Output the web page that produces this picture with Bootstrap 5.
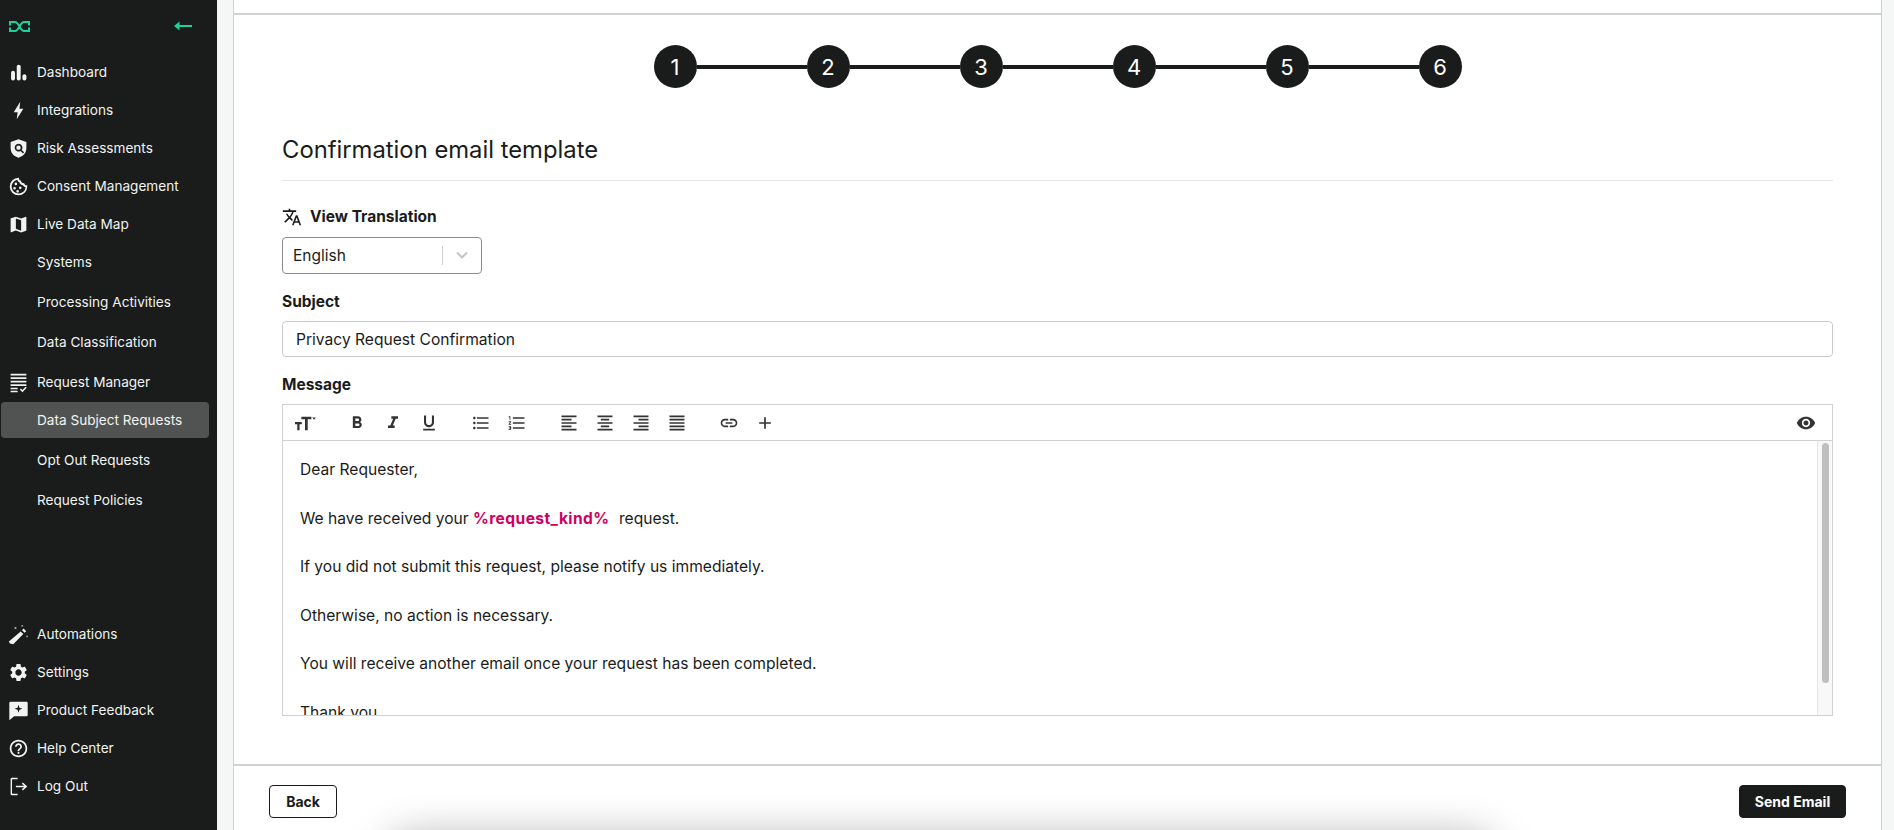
<!DOCTYPE html>
<html lang="en">
<head>
  <meta charset="UTF-8" />
  <meta name="viewport" content="width=device-width, initial-scale=1.0" />
  <title>Confirmation email template</title>
  <link href="https://cdn.jsdelivr.net/npm/bootstrap@5.3.0/dist/css/bootstrap.min.css" rel="stylesheet" />
  <style>
    html, body { height: 830px; overflow: hidden; }
    body { font-family: "Inter", "Liberation Sans", sans-serif; font-size: 14px; color: #1a1c1b; background: #f5f7f6; }

    /* sidebar */
    .side-bar { width: 217px; height: 830px; flex: none; background: #1a1c1b; color: #f1f3f2; }
    .side-head { height: 52px; padding: 0 25px 0 9px; }
    .side-main { padding-top: 1px; }
    .side-link { height: 38px; padding-left: 8px; gap: 8px; color: #f1f3f2; text-decoration: none; font-size: 13.6px; }
    .side-link svg { width: 21px; height: 21px; fill: #f1f3f2; flex: none; }
    .side-sub { height: 36px; margin: 0 8px 4px 1px; padding-left: 36px; border-radius: 4px; color: #f1f3f2; text-decoration: none; font-size: 13.6px; }
    .side-sub.sub-first { margin-top: 1px; }
    .side-sub.sub-last { margin-bottom: 3px; }
    .side-sub.is-on { background: #515352; }
    .side-bottom { padding-bottom: 25px; }

    /* main */
    .main-wrap { padding: 0 12px 0 16px; position: relative; overflow: hidden; }
    .wizard { background: #fff; border-left: 1px solid #d0d2d1; border-right: 1px solid #d0d2d1; height: 830px; }
    .wizard-top { height: 15px; border-bottom: 2px solid #d0d2d1; }
    .wizard-body { height: 749px; padding: 30px 48px 0; }
    .wizard-foot { height: 66px; padding: 19px 35px 0 35px; border-top: 2px solid #d0d2d1; }

    .step-dot { width: 43px; height: 43px; border-radius: 50%; background: #1a1c1b; color: #fff; font-size: 22px; line-height: 1; }
    .step-bar { width: 110px; height: 4px; background: #1a1c1b; }

    .wizard-title { font-size: 23.800px; font-weight: 400; line-height: 32px; margin: 46px 0 0; padding-bottom: 14px; border-bottom: 1px solid #e6e8e7; }
    .field-label { font-size: 15.500px; font-weight: 700; line-height: 20px; margin: 18px 0 0; }
    .field-trans { margin-top: 26px; }
    .field-trans svg { width: 20px; height: 20px; margin-right: 8px; fill: #1a1c1b; }
    .lang-select { width: 200px; height: 37px; border: 1px solid #8c8e8d; border-radius: 4px; font-size: 15.500px; padding-left: 10px; margin-top: 10px; }
    .lang-sep { width: 1px; height: 19px; background: #cfcfcf; }
    .lang-arrow { width: 38px; }
    .subject-input.form-control { height: 36px; border: 1px solid #c9cbca; border-radius: 4px; font-size: 15.600px; padding: 0 13px; color: #1a1c1b; margin-top: 9px; }

    .editor-box { height: 312px; border: 1px solid #d0d2d1; margin-top: 9px; }
    .editor-tools { height: 36px; border-bottom: 1px solid #d0d2d1; padding: 0 8px 0 4px; gap: 16px; }
    .tool-btn { width: 36px; height: 35px; }
    .tool-btn svg { width: 20px; height: 20px; fill: #333; }
    .tool-size svg { width: 22px; height: 20px; }
    .editor-main { height: 274px; }
    .editor-text { overflow: hidden; padding: 17px 16px 0 17px; font-size: 15.600px; line-height: 24.250px; color: #1a1c1b; }
    .editor-text p { margin: 0 0 24.250px; }
    .editor-track { width: 15px; flex: none; background: #f8f8f8; border-left: 1px solid #e6e6e6; padding: 2px 3px 0 4px; }
    .editor-thumb { height: 240px; background: #bfbfbf; border-radius: 4px; }
    .kind-tag { color: #cf0060; font-weight: 700; letter-spacing: .4px; margin-right: 5px; }

    .foot-btn { height: 33px; padding: 0; font-size: 14px; font-weight: 700; border-radius: 4px; display: flex; align-items: center; justify-content: center; }
    .back-btn { width: 68px; border: 1px solid #1a1c1b; color: #1a1c1b; background: #fff; }
    .send-btn { width: 107px; border: 1px solid #1a1c1b; color: #fff; background: #1a1c1b; }
    .foot-shade { position: absolute; left: 172px; width: 1105px; top: 842px; height: 60px; border-radius: 30px; box-shadow: 0 0 40px 8px rgba(0,0,0,.28); pointer-events: none; }
  </style>
</head>
<body class="d-flex">

  <svg width="0" height="0" class="position-absolute">
    <symbol id="i-chart" viewBox="0 0 24 24"><rect x="3.500" y="10" width="4.500" height="11" rx="2.200"/><rect x="10" y="3" width="4.500" height="18" rx="2.200"/><rect x="16.500" y="14" width="4.500" height="7" rx="2.200"/></symbol>
    <symbol id="i-bolt" viewBox="0 0 24 24"><path d="M14 2 6.500 14H11l-1 8 7.500-12H13z"/></symbol>
    <symbol id="i-shield" viewBox="0 0 24 24"><path fill-rule="evenodd" d="M12 1.500 3 4.500v7c0 5.500 3.800 9.800 9 11 5.200-1.200 9-5.500 9-11v-7zM12 6.500a4.500 4.500 0 0 1 3.700 7.100l2.700 2.700-1.300 1.300-2.700-2.700A4.500 4.500 0 1 1 12 6.500zm0 2a2.500 2.500 0 1 0 0 5 2.500 2.500 0 0 0 0-5z"/></symbol>
    <symbol id="i-cookie" viewBox="0 0 24 24"><path fill-rule="evenodd" d="M12 2a10 10 0 1 0 10 10c0-.6 0-1-.1-1.500-1.700.3-3.100-.7-3.400-2.300-1.900.2-3.700-1.100-3.900-3-1.300-.2-2.300-1.300-2.100-3.100-.2 0-.3-.1-.5-.1zm-1.500 2.200c.4 1.400 1.300 2.400 2.500 2.900.6 1.900 2.100 3.200 4 3.500.7 1.200 1.800 2 3.100 2.200A8 8 0 1 1 10.500 4.200zM9 7.500A1.500 1.500 0 1 0 9 10.500 1.500 1.500 0 0 0 9 7.500zM7.500 12.500a1.500 1.500 0 1 0 0 3 1.500 1.500 0 0 0 0-3zM14 12a1.500 1.500 0 1 0 0 3 1.500 1.500 0 0 0 0-3zM11 16a1.500 1.500 0 1 0 0 3 1.500 1.500 0 0 0 0-3z"/></symbol>
    <symbol id="i-map" viewBox="0 0 24 24"><path d="M20.500 3l-.16.03L15 5.100 9 3 3.360 4.900c-.21.07-.36.25-.36.48V20.500c0 .28.22.5.5.5l.16-.03L9 18.900l6 2.100 5.640-1.900c.21-.07.36-.25.36-.48V3.500c0-.28-.22-.5-.5-.5zM15 19l-6-2.110V5l6 2.110V19z"/></symbol>
    <symbol id="i-request" viewBox="0 0 24 24"><path d="M3 2h18v2H3zM3 6h18v2H3zM3 10h18v2H3zM3 14h18v2H3zM3 18h8v1.700H3zM3 21.300h8V23H3zM13.500 20l1.300-1.200 1.700 1.700 3.600-3.600 1.300 1.200-4.900 4.900z"/></symbol>
    <symbol id="i-wand" viewBox="0 0 24 24"><path d="M14.500 8.500l3 3L6 23l-3.800-.8L1 20zM16 7l1.800-1.800 3 3L19 10zM7 3l1.500 1L10 3 9 4.500 10 6 8.500 5 7 6 8 4.500zM15 1l1.200.8L17.500 1l-.8 1.200.8 1.300-1.300-.8-1.200.8.800-1.300zM20.500 13l1.200.8 1.300-.8-.8 1.200.8 1.300-1.300-.8-1.200.8.800-1.300z"/></symbol>
    <symbol id="i-gear" viewBox="0 0 24 24"><path d="M19.140 12.940c.04-.3.06-.61.06-.94 0-.32-.02-.64-.07-.94l2.030-1.580c.18-.14.23-.41.12-.61l-1.920-3.320c-.12-.22-.37-.29-.59-.22l-2.390.96c-.5-.38-1.030-.7-1.620-.94l-.36-2.540c-.04-.24-.24-.41-.48-.41h-3.840c-.24 0-.43.17-.47.41l-.36 2.540c-.59.24-1.130.57-1.620.94l-2.390-.96c-.22-.08-.47 0-.59.22L2.740 8.870c-.12.21-.08.47.12.61l2.030 1.580c-.05.3-.09.63-.09.94s.02.64.07.94l-2.030 1.580c-.18.14-.23.41-.12.61l1.920 3.320c.12.22.37.29.59.22l2.390-.96c.5.38 1.030.7 1.620.94l.36 2.540c.05.24.24.41.48.41h3.840c.24 0 .44-.17.47-.41l.36-2.540c.59-.24 1.130-.56 1.620-.94l2.390.96c.22.08.47 0 .59-.22l1.920-3.320c.12-.22.07-.47-.12-.61l-2.010-1.580zM12 15.600c-1.980 0-3.600-1.620-3.600-3.600s1.620-3.600 3.600-3.600 3.600 1.620 3.600 3.600-1.620 3.600-3.600 3.600z"/></symbol>
    <symbol id="i-feedback" viewBox="0 0 24 24"><path fill-rule="evenodd" d="M3 2h18a1.500 1.500 0 0 1 1.500 1.500v13.500a1.500 1.500 0 0 1-1.500 1.500H7l-5.500 4.500V3.500A1.500 1.500 0 0 1 3 2zM12 5.500l-1.100 3.400-3.400 1.100 3.400 1.100 1.100 3.400 1.100-3.400 3.400-1.100-3.400-1.100z"/></symbol>
    <symbol id="i-help" viewBox="0 0 24 24"><path d="M11 18h2v-2h-2v2zm1-16C6.480 2 2 6.480 2 12s4.480 10 10 10 10-4.480 10-10S17.520 2 12 2zm0 18c-4.410 0-8-3.590-8-8s3.590-8 8-8 8 3.590 8 8-3.590 8-8 8zm0-14c-2.210 0-4 1.790-4 4h2c0-1.100.9-2 2-2s2 .9 2 2c0 2-3 1.750-3 5h2c0-2.250 3-2.500 3-5 0-2.210-1.790-4-4-4z"/></symbol>
    <symbol id="i-logout" viewBox="0 0 24 24"><path d="M4.500 2H11v1.800H5.300a.7.7 0 0 0-.7.700v15a.7.7 0 0 0 .7.700H11V22H4.500A1.500 1.500 0 0 1 3 20.500v-17A1.500 1.500 0 0 1 4.500 2zM17 7.500l5 4.500-5 4.500-1.200-1.300 2.700-2.300H9v-1.800h9.500l-2.700-2.300z"/></symbol>

    <symbol id="t-size" viewBox="0 0 24 22"><path d="M8 4v3h4v12h3V7h4V4zM1 10v2.500h2.500V19h2.500v-6.500h2.500V10zM20 5h4l-2 2.500z"/></symbol>
    <symbol id="t-bold" viewBox="0 0 24 24"><path d="M15.600 10.790c.97-.67 1.650-1.770 1.650-2.790 0-2.260-1.750-4-4-4H7v14h7.040c2.090 0 3.710-1.700 3.710-3.790 0-1.520-.86-2.820-2.150-3.420zM10 6.500h3c.83 0 1.500.67 1.500 1.500s-.67 1.500-1.500 1.500h-3v-3zm3.500 9H10v-3h3.500c.83 0 1.500.67 1.500 1.500s-.67 1.500-1.500 1.500z"/></symbol>
    <symbol id="t-italic" viewBox="0 0 24 24"><path d="M10 4v3h2.210l-3.420 8H6v3h8v-3h-2.210l3.420-8H18V4z"/></symbol>
    <symbol id="t-under" viewBox="0 0 24 24"><path d="M12 17c3.310 0 6-2.690 6-6V3h-2.500v8c0 1.930-1.570 3.500-3.500 3.500S8.500 12.930 8.500 11V3H6v8c0 3.310 2.690 6 6 6zm-7 2v2h14v-2H5z"/></symbol>
    <symbol id="t-ul" viewBox="0 0 24 24"><path d="M4 10.500c-.83 0-1.500.67-1.500 1.500s.67 1.500 1.500 1.500 1.500-.67 1.500-1.500-.67-1.500-1.500-1.500zm0-6c-.83 0-1.500.67-1.500 1.500S3.170 7.500 4 7.500 5.500 6.830 5.500 6 4.830 4.500 4 4.500zm0 12c-.83 0-1.500.68-1.500 1.500s.68 1.500 1.500 1.500 1.500-.68 1.500-1.500-.67-1.500-1.500-1.500zM7 19h14v-2H7v2zm0-6h14v-2H7v2zm0-8v2h14V5H7z"/></symbol>
    <symbol id="t-ol" viewBox="0 0 24 24"><path d="M2 17h2v.5H3v1h1v.5H2v1h3v-4H2v1zm1-9h1V4H2v1h1v3zm-1 3h1.800L2 13.100v.9h3v-1H3.200L5 10.900V10H2v1zm5-6v2h14V5H7zm0 14h14v-2H7v2zm0-6h14v-2H7v2z"/></symbol>
    <symbol id="t-left" viewBox="0 0 24 24"><path d="M15 15H3v2h12v-2zm0-8H3v2h12V7zM3 13h18v-2H3v2zm0 8h18v-2H3v2zM3 3v2h18V3H3z"/></symbol>
    <symbol id="t-center" viewBox="0 0 24 24"><path d="M7 15v2h10v-2H7zm-4 6h18v-2H3v2zm0-8h18v-2H3v2zm4-6v2h10V7H7zM3 3v2h18V3H3z"/></symbol>
    <symbol id="t-right" viewBox="0 0 24 24"><path d="M3 21h18v-2H3v2zm6-4h12v-2H9v2zm-6-4h18v-2H3v2zm6-4h12V7H9v2zM3 3v2h18V3H3z"/></symbol>
    <symbol id="t-just" viewBox="0 0 24 24"><path d="M3 21h18v-2H3v2zm0-4h18v-2H3v2zm0-4h18v-2H3v2zm0-4h18V7H3v2zm0-6v2h18V3H3z"/></symbol>
    <symbol id="t-link" viewBox="0 0 24 24"><path d="M3.900 12c0-1.710 1.390-3.100 3.100-3.100h4V7H7c-2.760 0-5 2.240-5 5s2.240 5 5 5h4v-1.900H7c-1.710 0-3.100-1.390-3.100-3.100zM8 13h8v-2H8v2zm9-6h-4v1.900h4c1.710 0 3.100 1.390 3.100 3.100s-1.390 3.100-3.100 3.100h-4V17h4c2.760 0 5-2.240 5-5s-2.240-5-5-5z"/></symbol>
    <symbol id="t-plus" viewBox="0 0 24 24"><path d="M19 13h-6v6h-2v-6H5v-2h6V5h2v6h6v2z"/></symbol>
    <symbol id="t-eye" viewBox="0 0 24 24"><path d="M12 4.500C7 4.500 2.730 7.610 1 12c1.730 4.390 6 7.500 11 7.500s9.270-3.110 11-7.500c-1.730-4.390-6-7.500-11-7.500zM12 17c-2.760 0-5-2.240-5-5s2.240-5 5-5 5 2.240 5 5-2.240 5-5 5zm0-8c-1.660 0-3 1.340-3 3s1.340 3 3 3 3-1.340 3-3-1.340-3-3-3z"/></symbol>
    <symbol id="t-lang" viewBox="0 0 24 24"><path d="M12.870 15.070l-2.540-2.510.03-.03c1.740-1.940 2.980-4.170 3.710-6.530H17V4h-7V2H8v2H1v1.990h11.170C11.500 7.920 10.440 9.750 9 11.350 8.070 10.320 7.300 9.190 6.690 8h-2c.73 1.630 1.730 3.170 2.980 4.560l-5.090 5.020L4 19l5-5 3.110 3.110.76-2.040zM18.500 10h-2L12 22h2l1.120-3h4.750L21 22h2l-4.500-12zm-2.620 7l1.620-4.330L19.120 17h-3.240z"/></symbol>
  </svg>

  <!-- sidebar -->
  <nav class="side-bar d-flex flex-column">
    <div class="side-head d-flex align-items-center justify-content-between">
      <svg width="21" height="13" viewBox="0 0 21 13" fill="none" stroke="#19d39b" stroke-width="2"><path d="M1 5.500V2H6C10 2 11 11 15 11H20V7.500M1 7.500V11H6C10 11 11 2 15 2H20V5.500"/></svg>
      <svg width="18" height="10" viewBox="0 0 18 10" fill="#19d39b"><path d="M0 5 5.500.5V4H18v2H5.500v3.500z"/></svg>
    </div>
    <div class="side-main">
      <a class="side-link d-flex align-items-center" href="#"><svg><use href="#i-chart"/></svg>Dashboard</a>
      <a class="side-link d-flex align-items-center" href="#"><svg><use href="#i-bolt"/></svg>Integrations</a>
      <a class="side-link d-flex align-items-center" href="#"><svg><use href="#i-shield"/></svg>Risk Assessments</a>
      <a class="side-link d-flex align-items-center" href="#"><svg><use href="#i-cookie"/></svg>Consent Management</a>
      <a class="side-link d-flex align-items-center" href="#"><svg><use href="#i-map"/></svg>Live Data Map</a>
      <a class="side-sub sub-first d-flex align-items-center" href="#">Systems</a>
      <a class="side-sub d-flex align-items-center" href="#">Processing Activities</a>
      <a class="side-sub sub-last d-flex align-items-center" href="#">Data Classification</a>
      <a class="side-link d-flex align-items-center" href="#"><svg><use href="#i-request"/></svg>Request Manager</a>
      <a class="side-sub sub-first is-on d-flex align-items-center" href="#">Data Subject Requests</a>
      <a class="side-sub d-flex align-items-center" href="#">Opt Out Requests</a>
      <a class="side-sub d-flex align-items-center" href="#">Request Policies</a>
    </div>
    <div class="side-bottom mt-auto">
      <a class="side-link d-flex align-items-center" href="#"><svg><use href="#i-wand"/></svg>Automations</a>
      <a class="side-link d-flex align-items-center" href="#"><svg><use href="#i-gear"/></svg>Settings</a>
      <a class="side-link d-flex align-items-center" href="#"><svg><use href="#i-feedback"/></svg>Product Feedback</a>
      <a class="side-link d-flex align-items-center" href="#"><svg><use href="#i-help"/></svg>Help Center</a>
      <a class="side-link d-flex align-items-center" href="#"><svg><use href="#i-logout"/></svg>Log Out</a>
    </div>
  </nav>

  <!-- main -->
  <main class="main-wrap flex-grow-1">
    <div class="wizard">
      <div class="wizard-top"></div>
      <div class="wizard-body">
        <div class="d-flex align-items-center justify-content-center">
          <div class="step-dot d-flex align-items-center justify-content-center">1</div><div class="step-bar"></div>
          <div class="step-dot d-flex align-items-center justify-content-center">2</div><div class="step-bar"></div>
          <div class="step-dot d-flex align-items-center justify-content-center">3</div><div class="step-bar"></div>
          <div class="step-dot d-flex align-items-center justify-content-center">4</div><div class="step-bar"></div>
          <div class="step-dot d-flex align-items-center justify-content-center">5</div><div class="step-bar"></div>
          <div class="step-dot d-flex align-items-center justify-content-center">6</div>
        </div>

        <h4 class="wizard-title">Confirmation email template</h4>

        <div class="field-label field-trans d-flex align-items-center"><svg viewBox="0 0 24 24"><use href="#t-lang"/></svg>View Translation</div>
        <div class="lang-select d-flex align-items-center">
          <span class="flex-grow-1">English</span>
          <span class="lang-sep"></span>
          <span class="lang-arrow d-flex justify-content-center">
            <svg width="14" height="9" viewBox="0 0 14 9" fill="none" stroke="#c4c4c4" stroke-width="2"><path d="M2 1.500 7 6.500 12 1.500"/></svg>
          </span>
        </div>

        <label class="field-label d-block">Subject</label>
        <input type="text" class="form-control subject-input" value="Privacy Request Confirmation">

        <label class="field-label d-block">Message</label>
        <div class="editor-box">
          <div class="editor-tools d-flex align-items-center">
            <div class="d-flex">
              <div class="tool-btn tool-size d-flex align-items-center justify-content-center"><svg viewBox="0 0 24 22"><use href="#t-size"/></svg></div>
            </div>
            <div class="d-flex">
              <div class="tool-btn d-flex align-items-center justify-content-center"><svg viewBox="0 0 24 24"><use href="#t-bold"/></svg></div>
              <div class="tool-btn d-flex align-items-center justify-content-center"><svg viewBox="0 0 24 24"><use href="#t-italic"/></svg></div>
              <div class="tool-btn d-flex align-items-center justify-content-center"><svg viewBox="0 0 24 24"><use href="#t-under"/></svg></div>
            </div>
            <div class="d-flex">
              <div class="tool-btn d-flex align-items-center justify-content-center"><svg viewBox="0 0 24 24"><use href="#t-ul"/></svg></div>
              <div class="tool-btn d-flex align-items-center justify-content-center"><svg viewBox="0 0 24 24"><use href="#t-ol"/></svg></div>
            </div>
            <div class="d-flex">
              <div class="tool-btn d-flex align-items-center justify-content-center"><svg viewBox="0 0 24 24"><use href="#t-left"/></svg></div>
              <div class="tool-btn d-flex align-items-center justify-content-center"><svg viewBox="0 0 24 24"><use href="#t-center"/></svg></div>
              <div class="tool-btn d-flex align-items-center justify-content-center"><svg viewBox="0 0 24 24"><use href="#t-right"/></svg></div>
              <div class="tool-btn d-flex align-items-center justify-content-center"><svg viewBox="0 0 24 24"><use href="#t-just"/></svg></div>
            </div>
            <div class="d-flex">
              <div class="tool-btn d-flex align-items-center justify-content-center"><svg viewBox="0 0 24 24"><use href="#t-link"/></svg></div>
              <div class="tool-btn d-flex align-items-center justify-content-center"><svg viewBox="0 0 24 24"><use href="#t-plus"/></svg></div>
            </div>
            <div class="tool-btn d-flex align-items-center justify-content-center ms-auto"><svg viewBox="0 0 24 24"><use href="#t-eye"/></svg></div>
          </div>
          <div class="editor-main d-flex">
            <div class="editor-text flex-grow-1">
              <p>Dear Requester,</p>
              <p>We have received your <span class="kind-tag">%request_kind%</span> request.</p>
              <p>If you did not submit this request, please notify us immediately.</p>
              <p>Otherwise, no action is necessary.</p>
              <p>You will receive another email once your request has been completed.</p>
              <p>Thank you,</p>
            </div>
            <div class="editor-track"><div class="editor-thumb"></div></div>
          </div>
        </div>
      </div>
      <div class="wizard-foot d-flex justify-content-between">
        <button type="button" class="btn foot-btn back-btn">Back</button>
        <button type="button" class="btn foot-btn send-btn">Send Email</button>
      </div>
    </div>
    <div class="foot-shade"></div>
  </main>

</body>
</html>
